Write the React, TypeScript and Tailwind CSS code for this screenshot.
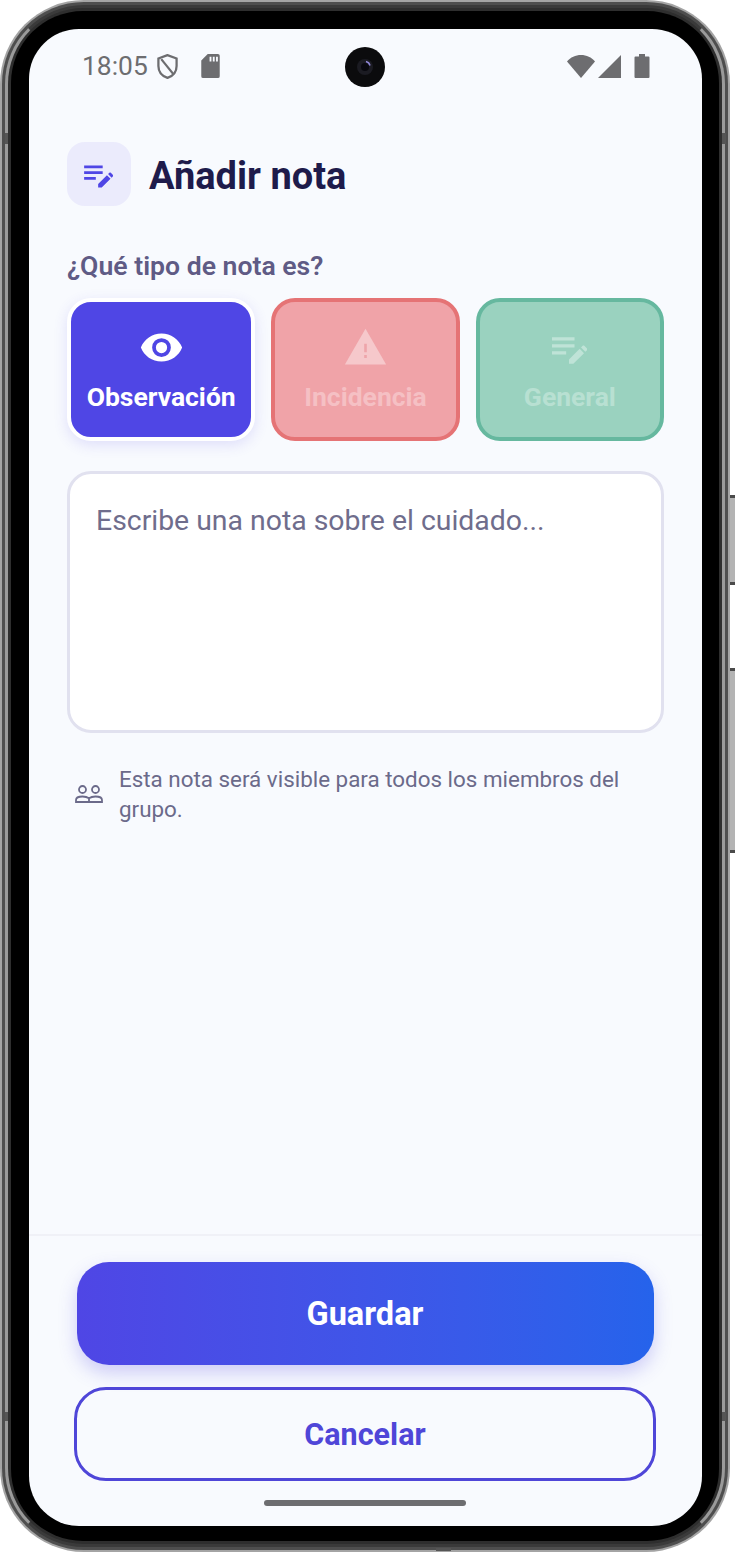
import React from 'react';

const font = { fontFamily: 'Roboto, sans-serif' };

function NoteIcon({ className }: { className?: string }) {
  // lines + pencil, same as Material "edit_note"
  return (
    <svg viewBox="0 0 24 24" className={className} fill="currentColor">
      <path d="M3 5.500h13.500v2H3zM3 9.700h13.500v2H3zM3 13.900h8.500v2H3z" />
      <path d="M13.200 21.500v-2.600l6.400-6.400 2.600 2.600-6.400 6.400zM20.400 11.700l1-1c.3-.3.7-.3 1 0l1.600 1.600c.3.3.3.7 0 1l-1 1z" />
    </svg>
  );
}

function TypeButton({
  label,
  icon,
  className,
  textClass,
}: {
  label: string;
  icon: React.ReactNode;
  className: string;
  textClass: string;
}) {
  return (
    <div className={`flex flex-col items-center justify-center h-[143px] pt-[3px] rounded-[24px] border-[4px] ${className}`}>
      <div className="h-[36px] flex items-center justify-center">{icon}</div>
      <span className={`mt-[15px] text-[26.500px] leading-[32px] font-bold ${textClass}`}>{label}</span>
    </div>
  );
}

export default function App() {
  return (
    <div className="relative w-[735px] h-[1553px] bg-white overflow-hidden" style={font}>
      {/* botones laterales */}
      <div className="absolute left-[729px] top-[495px] w-[6px] h-[90px] bg-[#b4b4b4] border-y-[3px] border-[#4a4a4a]" />
      <div className="absolute left-[729px] top-[668px] w-[6px] h-[185px] bg-[#b4b4b4] border-y-[3px] border-[#4a4a4a]" />

      {/* bandas de antena */}
      <div className="absolute left-[5px] top-[133px] w-[3px] h-[11px] bg-[#555555] z-10" />
      <div className="absolute left-[722px] top-[133px] w-[4px] h-[11px] bg-[#555555] z-10" />
      <div className="absolute left-[5px] top-[1412px] w-[3px] h-[9px] bg-[#555555] z-10" />
      <div className="absolute left-[722px] top-[1412px] w-[4px] h-[9px] bg-[#555555] z-10" />
      <div className="absolute left-[436px] top-[1548px] w-[15px] h-[3px] bg-[#555555] z-10" />

      {/* marco del teléfono */}
      <div className="relative w-[730px] h-[1552px] rounded-[84px] bg-[#a4a4a4] p-[2px]">
        <div className="w-full h-full rounded-[82px] bg-[#4e4e4e] p-[3px]">
          <div className="w-full h-full rounded-[79px] border-[3px] border-x-[#9a9a9a] border-y-[#3a3a3a] bg-[#2e2e2e] p-[3px]">
            <div className="w-full h-full rounded-[72px] bg-black pt-[18px] pl-[18px] pr-[17px] pb-[15px]">
              <div className="relative flex flex-col w-full h-full rounded-[50px] overflow-hidden bg-[#f8fafe]">
                {/* status bar */}
                <div className="relative flex items-center justify-between h-[74px] pl-[53px] pr-[52px] shrink-0">
                  <div className="flex items-center text-[#6d6d70]">
                    <span className="text-[26.400px] leading-[30px]">18:05</span>
                    <svg viewBox="3 1 18 22" className="w-[21px] h-[25px] ml-[9px]" fill="none" stroke="currentColor" strokeWidth="2">
                      <path d="M12 2 4 5v6.500c0 5 3.400 8.900 8 10.500 4.600-1.600 8-5.500 8-10.500V5z" />
                      <path d="M6.500 5.500 17 18.500" />
                    </svg>
                    <svg viewBox="0 0 20 26" className="w-[19px] h-[24px] ml-[23px]" fill="currentColor">
                      <path d="M7 0h11a2 2 0 0 1 2 2v22a2 2 0 0 1-2 2H2a2 2 0 0 1-2-2V7zM9 3v5h2V3zm3.500 0v5h2V3zM16 3v5h2V3z" fillRule="evenodd" />
                    </svg>
                  </div>
                  <div className="absolute left-[316px] top-[18px] flex items-center justify-center w-[40px] h-[40px] rounded-full bg-[#0b0b0d]">
                    <svg viewBox="0 0 16 16" className="w-[16px] h-[16px]">
                      <circle cx="8" cy="8" r="8" fill="#1b1b22" />
                      <circle cx="8" cy="8" r="4" fill="#08080e" />
                      <path d="M9 2.500a5.500 5.500 0 0 1 4 4" fill="none" stroke="#8f86d8" strokeWidth="1.500" />
                    </svg>
                  </div>
                  <div className="flex items-center text-[#6d6d70]">
                    <svg viewBox="0 0 28 24" className="w-[28px] h-[24px]" fill="currentColor">
                      <path d="M0 7.500C3.500 3.300 8.500 1 14 1s10.500 2.300 14 6.500L14 24z" />
                    </svg>
                    <svg viewBox="0 0 24 24" className="w-[23px] h-[23px] ml-[3px]" fill="currentColor">
                      <path d="M24 0v24H0z" />
                    </svg>
                    <svg viewBox="0 0 15 24" className="w-[16px] h-[24px] ml-[13px]" fill="currentColor">
                      <path d="M4.500 0h6v2.500H14a1 1 0 0 1 1 1V23a1 1 0 0 1-1 1H1a1 1 0 0 1-1-1V3.500a1 1 0 0 1 1-1h3.500z" />
                    </svg>
                  </div>
                </div>

                {/* contenido */}
                <div className="flex-1 px-[38px] pt-[39px]">
                  <div className="flex items-center gap-[18px]">
                    <div className="flex items-center justify-center w-[64px] h-[64px] rounded-[18px] bg-[#ebebfc]">
                      <NoteIcon className="w-[33px] h-[33px] -ml-[5px] text-[#4f46e5]" />
                    </div>
                    <h1 className="pt-[4px] text-[38px] leading-[42px] font-bold text-[#1e1b4b]">Añadir nota</h1>
                  </div>

                  <p className="mt-[44px] text-[26.600px] leading-[32px] font-semibold text-[#5f5b85]">¿Qué tipo de nota es?</p>

                  <div className="grid grid-cols-3 gap-[16px] mt-[16px]">
                    <TypeButton
                      label="Observación"
                      className="bg-[#4f46e5] border-white shadow-[0_4px_14px_rgba(79,70,229,0.15)]"
                      textClass="text-white"
                      icon={
                        <svg viewBox="0 0 24 24" className="w-[45px] h-[45px] text-white" fill="currentColor">
                          <path d="M12 4.500C7 4.500 2.700 7.600 1 12c1.700 4.400 6 7.500 11 7.500s9.300-3.100 11-7.500c-1.700-4.400-6-7.500-11-7.500M12 17a5 5 0 1 1 0-10 5 5 0 0 1 0 10m0-8a3 3 0 1 0 0 6 3 3 0 0 0 0-6" />
                        </svg>
                      }
                    />
                    <TypeButton
                      label="Incidencia"
                      className="bg-[#f0a3a8] border-[#e57375]"
                      textClass="text-[#f5c0c4]"
                      icon={
                        <svg viewBox="0 0 24 24" className="w-[45px] h-[45px]">
                          <path d="M1 21h22L12 2z" fill="#f6c8cb" />
                          <path d="M11.300 10h1.400v4.500h-1.400zM11.300 16h1.400v1.600h-1.400z" fill="#eea5aa" />
                        </svg>
                      }
                    />
                    <TypeButton
                      label="General"
                      className="bg-[#9ad2bf] border-[#66b89f]"
                      textClass="text-[#b8e0d2]"
                      icon={<NoteIcon className="w-[40px] h-[40px] -ml-[5px] text-[#bfe3d7]" />}
                    />
                  </div>

                  <div className="mt-[30px] h-[262px] rounded-[24px] border-[3px] border-[#e1e1ef] bg-white px-[26px] pt-[28px]">
                    <p className="text-[28.400px] leading-[38px] text-[#6f6d8c]">Escribe una nota sobre el cuidado...</p>
                  </div>

                  <div className="flex items-center gap-[16px] mt-[31px] pl-[8px] pr-[20px]">
                    <svg viewBox="0 0 28 20" className="w-[28px] h-[20px] shrink-0 text-[#6b6a8a]" fill="none" stroke="currentColor" strokeWidth="1.800">
                      <circle cx="7.500" cy="5.500" r="3.500" />
                      <circle cx="20.500" cy="5.500" r="3.500" />
                      <path d="M1 18v-2c0-2.300 3-3.500 6.500-3.500 2.600 0 5 .7 6.500 1.800 1.500-1.100 3.900-1.800 6.500-1.800 3.500 0 6.500 1.200 6.500 3.500v2zM14 14.300V18" />
                    </svg>
                    <p className="text-[22.400px] leading-[30px] text-[#6b6a8a]">Esta nota será visible para todos los miembros del grupo.</p>
                  </div>
                </div>

                {/* acciones */}
                <div className="relative shrink-0 flex flex-col items-center h-[292px] pr-[1px] border-t-[2px] border-[#f0f1f7] pt-[26px]">
                  <div className="flex items-center justify-center w-[577px] h-[103px] pt-[2px] rounded-[32px] bg-gradient-to-r from-[#4f46e5] to-[#2563eb] shadow-[0_8px_18px_rgba(79,70,229,0.25)] text-[32.500px] font-bold text-white">
                    Guardar
                  </div>
                  <div className="flex items-center justify-center w-[582px] h-[94px] mt-[22px] pt-[2px] rounded-[32px] border-[3px] border-[#4f46d8] text-[30.500px] font-bold text-[#4f46d8]">
                    Cancelar
                  </div>
                  <div className="w-[202px] h-[6px] mt-[19px] rounded-full bg-[#6d6d70]" />
                </div>
              </div>
            </div>
          </div>
        </div>
      </div>
    </div>
  );
}
